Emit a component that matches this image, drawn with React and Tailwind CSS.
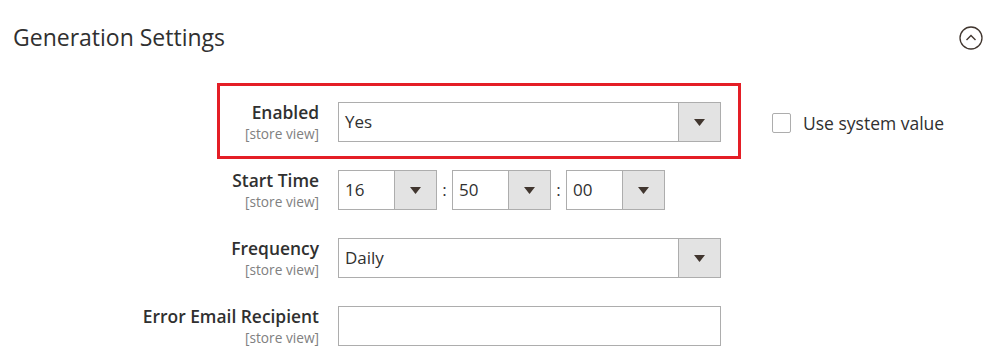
import React from 'react';

const font = { fontFamily: '"Open Sans", "Liberation Sans", sans-serif' };

// Small dark triangle used by every select button
const Arrow = () => (
  <svg width="11" height="7" viewBox="0 0 11 7" className="block">
    <path d="M0 0h11L5.5 7z" fill="#41362f" />
  </svg>
);

const Select = ({ value, width }) => (
  <div
    className="flex h-[40px] border border-[#adadad] bg-white"
    style={{ width }}
  >
    <div className="flex flex-1 items-center pl-[6px] text-[17px] text-[#303030]">{value}</div>
    <div className="flex w-[42px] items-center justify-center border-l border-[#adadad] bg-[#e3e3e3]">
      <Arrow />
    </div>
  </div>
);

const FieldLabel = ({ text }) => (
  <div className="w-[319px] shrink-0 text-right">
    <div className="text-[17.4px] font-semibold leading-[20px] text-[#303030]">{text}</div>
    <div className="mt-[2px] text-[13.7px] leading-[19px] text-[#808080]">[store view]</div>
  </div>
);

const Row = ({ label, children, extra }) => (
  <div className="flex h-[40px] items-start">
    <FieldLabel text={label} />
    <div className="ml-[19px] flex items-center">{children}</div>
    {extra}
  </div>
);

export default function App() {
  return (
    <div className="h-[358px] w-[1008px] overflow-hidden bg-white" style={font}>
      {/* Section header */}
      <div className="flex items-center justify-between pl-[13px] pr-[25px] pt-[23px]">
        <h2 className="text-[23px] font-normal leading-[28px] text-[#303030]">Generation Settings</h2>
        <svg width="24" height="24" viewBox="0 0 24 24" className="mt-[1px]">
          <circle cx="12" cy="12" r="11" fill="none" stroke="#41362f" strokeWidth="1.3" />
          <path d="M7.5 14l4.5-4.5 4.5 4.5" fill="none" stroke="#41362f" strokeWidth="1.4" />
        </svg>
      </div>

      <div className="mt-[51px] flex flex-col gap-[28px]">
        <div className="relative">
          {/* highlight frame around the Enabled field */}
          <div className="pointer-events-none absolute left-[217px] top-[-19px] h-[76px] w-[524px] border-[3px] border-[#e41e26]" />
          <Row
            label="Enabled"
            extra={
              <label className="ml-[51px] mt-[8px] flex items-center gap-[12px] text-[17.5px] text-[#303030]">
                <span className="block h-[20px] w-[19px] rounded-[2px] border border-[#adadad] bg-white" />
                Use system value
              </label>
            }
          >
            <Select value="Yes" width={383} />
          </Row>
        </div>

        <Row label="Start Time">
          <Select value="16" width={99} />
          <span className="w-[15px] text-center text-[17px] text-[#303030]">:</span>
          <Select value="50" width={99} />
          <span className="w-[15px] text-center text-[17px] text-[#303030]">:</span>
          <Select value="00" width={99} />
        </Row>

        <Row label="Frequency">
          <Select value="Daily" width={383} />
        </Row>

        <Row label="Error Email Recipient">
          <div className="h-[40px] w-[383px] border border-[#adadad] bg-white" />
        </Row>
      </div>
    </div>
  );
}
